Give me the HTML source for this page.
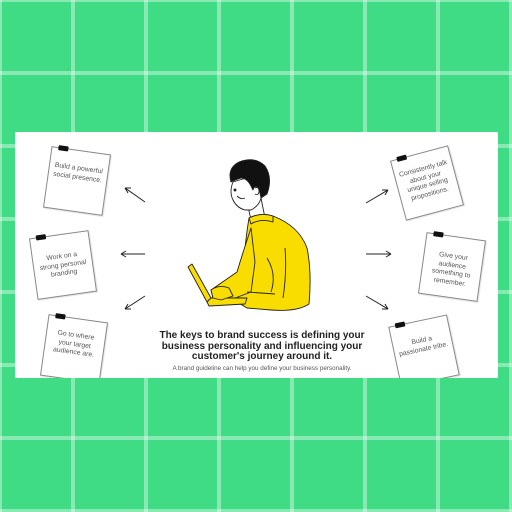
<!DOCTYPE html>
<html><head><style>
body{margin:0;width:512px;height:512px;overflow:hidden;background:#3fdb85;position:relative;font-family:"Liberation Sans",sans-serif}
.grid{position:absolute;inset:0;background-image:linear-gradient(to right,rgba(255,255,255,.38) 0 4px,transparent 4px),linear-gradient(to bottom,rgba(255,255,255,.38) 0 4px,transparent 4px);background-size:73px 73px;background-position:-2px -2px}
.panel{position:absolute;left:15px;top:132px;width:483px;height:246px;background:#fff;overflow:hidden}
.note{position:absolute;width:60px;height:62px;border:1px solid #888;background:#fff;box-shadow:1px 1px 1px rgba(0,0,0,.12);font-size:6.8px;color:#555;text-align:center;line-height:8.5px;box-sizing:border-box;padding:0 4px}
.note:before{content:"";position:absolute;left:6px;top:-3px;width:10px;height:5px;background:#111;border-radius:1px}
.t1{position:absolute;left:0;width:494px;top:199px;text-align:center;font-weight:bold;font-size:10px;line-height:10.5px;color:#222}
.t2{position:absolute;left:0;width:494px;top:233px;text-align:center;font-size:6.3px;color:#555}
</style></head><body>
<div class="grid"></div>
<div class="panel">
<div class="note" style="left:32px;top:18px;transform:rotate(8deg);padding-top:14px">Build a powerful social presence.</div>
<div class="note" style="left:18px;top:102px;transform:rotate(-8deg);padding-top:18px">Work on a strong personal branding</div>
<div class="note" style="left:29px;top:186px;transform:rotate(8deg);padding-top:13px">Go to where your target audience are.</div>
<div class="note" style="left:382px;top:20px;transform:rotate(-15deg);padding-top:12px">Consistently talk about your unique selling propositions.</div>
<div class="note" style="left:407px;top:104px;transform:rotate(8deg);padding-top:16px">Give your audience something to remember.</div>
<div class="note" style="left:379px;top:188px;transform:rotate(-12deg);padding-top:16px">Build a passionate tribe.</div>
<svg width="483" height="246" style="position:absolute;left:0;top:0" fill="none" stroke="#222" stroke-width="1">
<path d="M130 70 L110 56 M110 56 L116 56 M110 56 L113 61"/>
<path d="M130 122 L106 122 M106 122 L111 119 M106 122 L111 125"/>
<path d="M130 164 L110 177 M110 177 L113 172 M110 177 L116 177"/>
<path d="M351 71 L373 58 M373 58 L367 58 M373 58 L370 63"/>
<path d="M351 122 L376 122 M376 122 L371 119 M376 122 L371 125"/>
<path d="M351 164 L373 177 M373 177 L370 172 M373 177 L367 177"/>
<g stroke="#222" stroke-width="0.9" stroke-linejoin="round">
<!-- neck -->
<path d="M232 70 L236 88 L250 86 L246 66 Z" fill="#fff"/>
<!-- face -->
<path d="M218 50 Q214 60 218 68 Q222 76 230 78 L236 78 Q244 74 246 66 L248 54 L238 44 Z" fill="#fff"/>
<path d="M222 64 Q226 68 230 66"/>
<circle cx="220" cy="58" r="1" fill="#222"/>
<!-- hair -->
<path d="M216 50 Q212 36 224 30 Q240 24 250 34 Q258 46 252 62 L246 66 L244 56 Q240 52 238 58 L236 54 Q232 46 226 46 Q220 48 216 50 Z" fill="#111"/>
<path d="M240 56 Q244 54 244 60 Q243 64 240 62" fill="#fff"/>
<!-- sweater body -->
<path d="M234 86 Q246 80 258 84 Q284 94 292 116 Q297 140 294 172 Q282 180 256 178 L232 176 L222 170 L228 140 Q230 110 234 86 Z" fill="#f9dc00"/>
<path d="M234 86 Q246 80 258 84 L258 90 Q246 86 236 92 Z" fill="#f9dc00"/>
<!-- arm -->
<path d="M236 96 Q228 120 222 140 L196 158 L198 166 L215 168 L236 160 L240 130 Z" fill="#f9dc00"/>
<!-- laptop -->
<path d="M173 135 L177 132 L196 166 L192 170 Z" fill="#f9dc00"/>
<path d="M192 170 L196 166 L232 166 L230 172 L194 174 Z" fill="#f9dc00"/>
<!-- hands -->
<path d="M196 158 Q204 152 214 156 L218 164 L206 168 L198 166 Z" fill="#f9dc00"/>
<path d="M252 126 Q262 142 256 160 M270 116 Q272 140 268 166 M232 160 L260 162"/>
</g>
</svg>
<div class="t1">The keys to brand success is defining your<br>business personality and influencing your<br>customer's journey around it.</div>
<div class="t2">A brand guideline can help you define your business personality.</div>
</div>
</body></html>
